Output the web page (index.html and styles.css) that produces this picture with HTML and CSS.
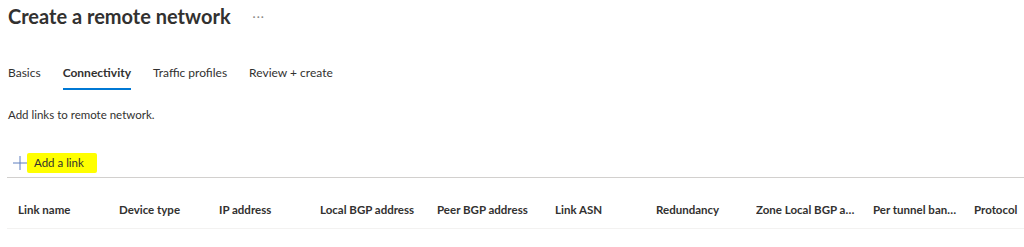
FILE: index.html
```html
<!DOCTYPE html>
<html lang="en">
<head>
    <meta charset="UTF-8">
    <title>Create a remote network</title>
    <link rel="stylesheet" href="styles.css">
</head>
<body>

<div class="page">
    <div class="title-row">
        <h1>Create a remote network</h1>
        <span class="more">&middot;&middot;&middot;</span>
    </div>

    <nav class="tabs">
        <a class="tab" href="#">Basics</a>
        <a class="tab active" href="#">Connectivity</a>
        <a class="tab" href="#">Traffic profiles</a>
        <a class="tab" href="#">Review + create</a>
    </nav>

    <p class="intro">Add links to remote network.</p>

    <div class="toolbar">
        <button class="add-btn">
            <svg class="plus" width="14" height="14" viewBox="0 0 14 14">
                <path d="M7 0v14M0 7h14" stroke="#5f7fbf" stroke-width="1" fill="none"/>
            </svg>
            <span class="mark">Add a link</span>
        </button>
    </div>

    <div class="grid-head">
        <div class="col">Link name</div>
        <div class="col">Device type</div>
        <div class="col">IP address</div>
        <div class="col">Local BGP address</div>
        <div class="col">Peer BGP address</div>
        <div class="col">Link ASN</div>
        <div class="col">Redundancy</div>
        <div class="col" title="Zone Local BGP address">Zone Local BGP address</div>
        <div class="col" title="Per tunnel bandwidth">Per tunnel bandwidth</div>
        <div class="col last">Protocol</div>
    </div>
</div>

</body>
</html>
```

FILE: styles.css
```css
body {
    margin: 0;
    padding: 0;
    background-color: #fff;
    color: #323130;
    font-family: Lato, "Open Sans", sans-serif;
}

.page {
    padding: 0 0 0 8px;
}

.title-row {
    display: flex;
    align-items: center;
    height: 32px;
}

.title-row h1 {
    margin: 0;
    font-size: 20px;
    font-weight: 700;
    line-height: 28px;
}

.more {
    margin-left: 22px;
    color: #8a8886;
    font-size: 12px;
    letter-spacing: 1px;
}

.tabs {
    display: flex;
    gap: 22px;
    margin-top: 29px;
}

.tab {
    color: #323130;
    text-decoration: none;
    font-size: 12px;
    line-height: 24px;
    padding-bottom: 3px;
    border-bottom: 2px solid transparent;
}

.tab.active {
    font-weight: 700;
    border-bottom-color: #0078d4;
}

.intro {
    margin: 17px 0 0;
    font-size: 11.5px;
    line-height: 16px;
}

.toolbar {
    margin-top: 26px;
    margin-left: -1px;
    padding: 4px 0 0 6px;
    height: 24px;
    border-bottom: 1px solid #d2d0ce;
}

.add-btn {
    display: flex;
    align-items: center;
    padding: 0;
    border: none;
    background: none;
    font-family: inherit;
    font-size: 11.5px;
    line-height: 14px;
    color: #323130;
    height: 20px;
}

.mark {
    background-color: #ffff00;
    padding: 3px 13px 3px 7px;
    border-radius: 2px;
}

.grid-head {
    display: grid;
    grid-template-columns: 101px 100px 101px 117px 118px 101px 100px 117px 101px 1fr;
    margin-left: -1px;
    padding: 24px 0 10px 11px;
    line-height: 16px;
    border-bottom: 1px solid #f3f2f1;
    font-size: 11.5px;
    font-weight: 700;
}

.col {
    overflow: hidden;
    white-space: nowrap;
    text-overflow: ellipsis;
    padding-right: 14px;
}

.col.last {
    padding-right: 0;
}
```
